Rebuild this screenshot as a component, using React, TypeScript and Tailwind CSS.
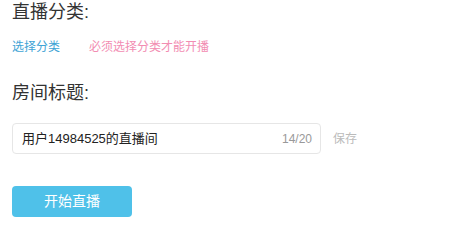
import React, { useState } from "react";

const font = { fontFamily: '"Liberation Sans", "Noto Sans CJK SC", sans-serif' };

export default function App() {
  const [title, setTitle] = useState("用户14984525的直播间");

  return (
    <div className="w-[467px] h-[232px] bg-white pl-3 pt-[1px] text-[#333]" style={font}>
      {/* Category */}
      <div className="text-[18px] leading-[22px]">直播分类:</div>
      <div className="flex items-center mt-[15px] text-[12px] leading-[18px]">
        <span className="text-[#3ea3d5] cursor-pointer">选择分类</span>
        <span className="ml-[29px] text-[#f28db2]">必须选择分类才能开播</span>
      </div>

      {/* Room title */}
      <div className="text-[18px] leading-[22px] mt-[26px]">房间标题:</div>
      <div className="flex items-center mt-[19px]">
        <div className="flex items-center w-[309px] h-[31px] border border-[#e6e6e6] rounded-[4px] px-[9px]">
          <input
            value={title}
            onChange={(e) => setTitle(e.target.value)}
            className="flex-1 min-w-0 outline-none text-[13px] text-[#222]"
            style={font}
          />
          <span className="text-[12px] text-[#999] -mr-[1px]">{title.length}/20</span>
        </div>
        <span className="ml-[12px] text-[12px] text-[#bbb]">保存</span>
      </div>

      {/* Start */}
      <button className="mt-[32px] w-[120px] h-[31px] rounded-[4px] bg-[#4fc1e9] text-white text-[14px]">
        开始直播
      </button>
    </div>
  );
}
